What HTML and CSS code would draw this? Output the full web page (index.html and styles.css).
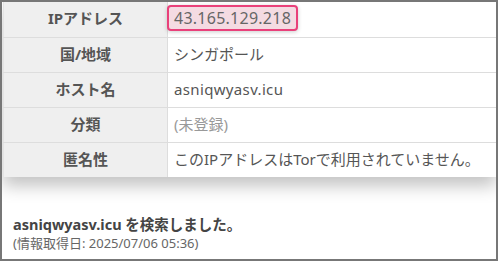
FILE: index.html
```html
<!DOCTYPE html>
<html lang="ja">
<head>
<meta charset="utf-8">
<link rel="stylesheet" href="styles.css">
</head>
<body>
<div class="frame">
  <table class="info">
    <tr><th>IPアドレス</th><td><span class="ip">43.165.129.218</span></td></tr>
    <tr><th>国/地域</th><td>シンガポール</td></tr>
    <tr><th>ホスト名</th><td class="latin">asniqwyasv.icu</td></tr>
    <tr><th>分類</th><td class="muted">(未登録)</td></tr>
    <tr><th>匿名性</th><td>このIPアドレスはTorで利用されていません。</td></tr>
  </table>
  <div class="result">
    <p class="title">asniqwyasv.icu を検索しました。</p>
    <p class="date">(情報取得日: 2025/07/06 05:36)</p>
  </div>
</div>
</body>
</html>
```
FILE: styles.css
```css
html, body {
  margin: 0;
  padding: 0;
  background: #fff;
}
body {
  font-family: "Noto Sans", "Noto Sans CJK JP", sans-serif;
  color: #555;
}
.frame {
  box-sizing: border-box;
  width: 498px;
  height: 261px;
  border: 2px solid #777;
  overflow: hidden;
}
.info {
  margin-left: 1px;
  width: 493px;
  border-collapse: collapse;
  box-shadow: 0 9px 16px rgba(0, 0, 0, 0.24);
  background: #fff;
}
.info th, .info td {
  height: 35px;
  padding: 0 0 2px 0;
  box-sizing: border-box;
  border-bottom: 1px solid #ddd;
  font-size: 15px;
  line-height: 20px;
}
.info tr:last-child th, .info tr:last-child td {
  border-bottom: none;
}
.info th {
  width: 164px;
  background: #efefef;
  font-weight: bold;
  text-align: center;
  border-right: 1px solid #ddd;
  border-left: 1px solid #e4e4e4;
  color: #555;
}
.info td {
  text-align: left;
  padding-left: 6px;
  color: #555;
}
.info .latin {
  letter-spacing: 0.35px;
}
.info .muted {
  color: #999;
}
.ip {
  display: inline-block;
  margin-left: -7px;
  padding: 1px 5px 1px 5px;
  border: 2px solid #e9407a;
  border-radius: 4px;
  background: #f4dbe2;
  color: #666;
  font-size: 16px;
  line-height: 20px;
  letter-spacing: 0.25px;
  box-shadow: 0 1px 4px rgba(0, 0, 0, 0.2);
}
.result {
  padding: 38px 0 0 11px;
}
.result p {
  margin: 0;
}
.title {
  font-size: 14.5px;
  font-weight: bold;
  line-height: 19px;
  color: #444;
}
.date {
  font-size: 13px;
  line-height: 18px;
  color: #666;
}
```
